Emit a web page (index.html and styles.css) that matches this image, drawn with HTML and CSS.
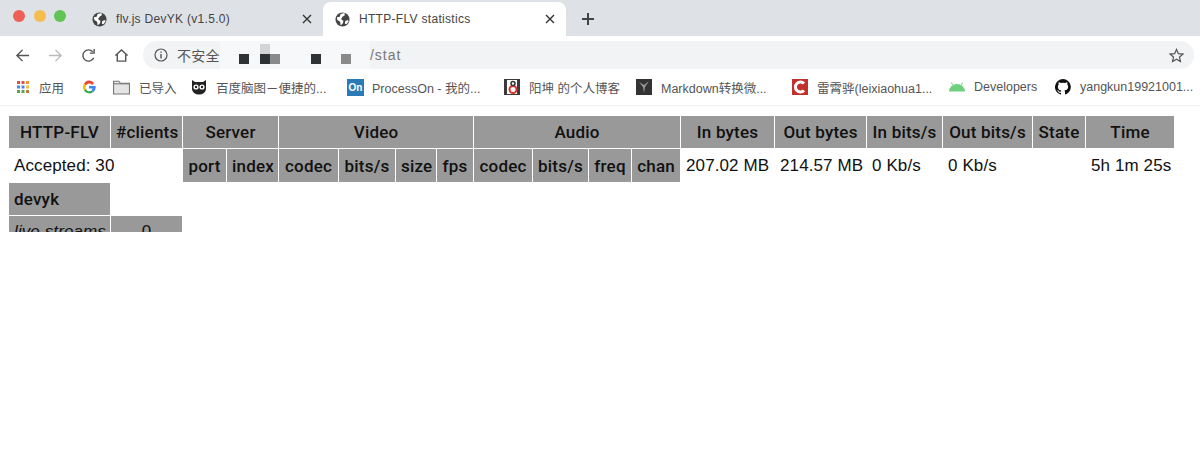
FILE: index.html
```html
<!DOCTYPE html>
<html lang="en">
<head>
  <meta charset="UTF-8" />
  <title>HTTP-FLV statistics</title>
  <link rel="stylesheet" href="styles.css">
</head>
<body>

<svg class="defs" width="0" height="0">
  <symbol id="globe" viewBox="0 0 16 16">
    <circle cx="8" cy="8" r="7.5" fill="#444"/>
    <path d="M2 5.5 5 5l1-3 4-1 .5 2.5L8 5 6.5 7.5 9 9.500 8.500 12 6 14.500 5.500 10.500 2.500 8.500zM11 9.500l3-1 .5 1.500-2.500 3-1.500-.5z" fill="#fff"/>
  </symbol>
  <symbol id="close" viewBox="0 0 10 10">
    <path d="M1 1l8 8M9 1l-8 8" stroke="#333" stroke-width="1.400" fill="none"/>
  </symbol>
</svg>

<!-- Tab strip -->
<div class="tabstrip">
  <div class="lights">
    <span class="light red"></span>
    <span class="light yellow"></span>
    <span class="light green"></span>
  </div>
  <div class="tab">
    <svg class="globe"><use href="#globe"/></svg>
    <span class="tab-title">flv.js DevYK (v1.5.0)</span>
    <svg class="tab-close"><use href="#close"/></svg>
  </div>
  <div class="tab active">
    <svg class="globe"><use href="#globe"/></svg>
    <span class="tab-title">HTTP-FLV statistics</span>
    <svg class="tab-close"><use href="#close"/></svg>
  </div>
  <svg class="new-tab" viewBox="0 0 14 14"><path d="M7 1v12M1 7h12" stroke="#444" stroke-width="2" fill="none"/></svg>
</div>

<!-- Toolbar -->
<div class="toolbar">
  <svg class="nav" viewBox="0 0 16 16"><path d="M15 8H2M8 2 2 8l6 6" stroke="#555" stroke-width="1.500" fill="none"/></svg>
  <svg class="nav" viewBox="0 0 16 16"><path d="M1 8h13M8 2l6 6-6 6" stroke="#bbb" stroke-width="1.500" fill="none"/></svg>
  <svg class="nav" viewBox="0 0 16 16"><path d="M13.500 10.500A6 6 0 1 1 12.500 4M14 1v4.500H9.500" stroke="#555" stroke-width="1.500" fill="none"/></svg>
  <svg class="nav" viewBox="0 0 16 16"><path d="M1.500 8 8 2l6.500 6M3.500 7v7h9V7" stroke="#555" stroke-width="1.500" fill="none"/></svg>
  <div class="omnibox">
    <svg class="info" viewBox="0 0 14 14"><circle cx="7" cy="7" r="6" stroke="#555" stroke-width="1.200" fill="none"/><path d="M7 6v4.500M7 3.500v1.300" stroke="#555" stroke-width="1.400"/></svg>
    <span class="insecure">不安全</span>
    <div class="mosaic">
      <span class="blot dark"></span>
      <span class="blot-stack"><span class="blot pale"></span><span class="blot dark"></span></span>
      <span class="blot mid"></span>
      <span class="blot dark gap-l"></span>
      <span class="blot mid gap-m"></span>
    </div>
    <span class="url">/stat</span>
    <svg class="star" viewBox="0 0 16 16"><path d="M8 1.500 10 6l4.800.5-3.600 3.200 1 4.800L8 12l-4.200 2.500 1-4.800L1.200 6.500 6 6z" stroke="#555" stroke-width="1.300" fill="none"/></svg>
  </div>
</div>

<!-- Bookmarks -->
<div class="bookmarks">
  <div class="bm bm-apps">
    <svg class="fav small" viewBox="0 0 14 14">
      <g fill="#d9534f"><rect x="1" y="1" width="3" height="3"/><rect x="5.500" y="1" width="3" height="3"/></g><rect x="10" y="1" width="3" height="3" fill="#e8963c"/>
      <rect x="1" y="5.500" width="3" height="3" fill="#4a86e8"/><rect x="5.500" y="5.500" width="3" height="3" fill="#4a86e8"/><rect x="10" y="5.500" width="3" height="3" fill="#f1c232"/>
      <rect x="1" y="10" width="3" height="3" fill="#5aa55a"/><rect x="5.500" y="10" width="3" height="3" fill="#5aa55a"/><rect x="10" y="10" width="3" height="3" fill="#c27c3a"/>
    </svg>
    <span>应用</span>
  </div>
  <div class="bm bm-g">
    <svg class="fav small" viewBox="0 0 14 14">
      <path d="M12 3A6 6 0 0 0 2 3.500L4 5.500A3.500 3.500 0 0 1 10 5z" fill="#ea4335"/>
      <path d="M2 3.500a6.500 6.500 0 0 0 0 7L4 9a3.500 3.500 0 0 1 0-3.500z" fill="#fbbc05"/>
      <path d="M2 10.500a6.500 6.500 0 0 0 9.500 1.500L9.500 10.500A3.500 3.500 0 0 1 4 9z" fill="#34a853"/>
      <path d="M13.500 6H7v2.500h3.500a3 3 0 0 1-1 2l2 1.500a6 6 0 0 0 2-6z" fill="#4285f4"/>
    </svg>
  </div>
  <div class="bm bm-folder">
    <svg class="fav folder" viewBox="0 0 16 14"><path d="M.5 1.500h5l1.500 2h8.500v10H.5z" fill="#e4e4e4" stroke="#777"/><path d="M.5 4h15" stroke="#777"/></svg>
    <span>已导入</span>
  </div>
  <div class="bm bm-owl">
    <svg class="fav" viewBox="0 0 16 16"><path d="M1 1l3 2h8l3-2v9a7 5.500 0 0 1-14 0z" fill="#222"/><circle cx="5" cy="8" r="2.600" fill="#fff"/><circle cx="11" cy="8" r="2.600" fill="#fff"/><circle cx="5" cy="8" r="1.200" fill="#222"/><circle cx="11" cy="8" r="1.200" fill="#222"/></svg>
    <span>百度脑图－便捷的...</span>
  </div>
  <div class="bm bm-on">
    <span class="on-icon">On</span>
    <span>ProcessOn - 我的...</span>
  </div>
  <div class="bm bm-yk">
    <svg class="fav" viewBox="0 0 16 16"><rect width="16" height="16" fill="#3a3a3a"/><rect x="3" y="1" width="10" height="14" fill="#fff"/><circle cx="9" cy="10.500" r="3.500" fill="none" stroke="#d9342b" stroke-width="2"/><circle cx="9" cy="4.500" r="2" fill="none" stroke="#333" stroke-width="1.500"/></svg>
    <span>阳坤 的个人博客</span>
  </div>
  <div class="bm bm-md">
    <svg class="fav" viewBox="0 0 16 16"><rect width="16" height="16" fill="#333"/><path d="M3 3l4 5 1 6 1-6 4-6-5 4z" fill="#999"/></svg>
    <span>Markdown转换微...</span>
  </div>
  <div class="bm bm-lei">
    <svg class="fav" viewBox="0 0 16 16"><rect width="16" height="16" fill="#c4302b"/><path d="M12 4.500A5 5 0 1 0 12 11.500" stroke="#fff" stroke-width="3" fill="none"/></svg>
    <span>雷霄骅(leixiaohua1...</span>
  </div>
  <div class="bm bm-droid">
    <svg class="fav" viewBox="0 0 16 16"><path d="M0 12.500a8 7.500 0 0 1 16 0z" fill="#6fcf7f"/><path d="M3.500 6 2.500 3.500M12.500 6l1-2.500" stroke="#6fcf7f" stroke-width="1"/></svg>
    <span>Developers</span>
  </div>
  <div class="bm bm-gh">
    <svg class="fav" viewBox="0 0 16 16"><path d="M8 0a8 8 0 0 0-2.500 15.600c.4.100.5-.2.500-.4v-1.400c-2.200.5-2.700-1-2.700-1-.4-.9-.9-1.200-.9-1.200-.7-.5.100-.5.100-.5.800.1 1.200.8 1.200.8.700 1.200 1.900.9 2.300.7.100-.5.300-.9.500-1.100-1.800-.2-3.600-.9-3.600-4 0-.9.300-1.600.8-2.100-.1-.2-.4-1 .1-2.100 0 0 .7-.2 2.200.8a7.600 7.600 0 0 1 4 0c1.500-1 2.200-.8 2.200-.8.400 1.100.2 1.900.1 2.100.5.600.8 1.300.8 2.100 0 3.100-1.900 3.700-3.700 3.900.3.300.6.800.6 1.500v2.200c0 .2.100.5.600.4A8 8 0 0 0 8 0z" fill="#111"/></svg>
    <span>yangkun19921001...</span>
  </div>
</div>

<!-- Page -->
<div class="page">
  <table class="stat">
    <colgroup>
      <col class="c101"><col class="c71"><col class="c43"><col class="c51"><col class="c59"><col class="c56">
      <col class="c40"><col class="c36"><col class="c58"><col class="c55"><col class="c42"><col class="c48">
      <col class="c93"><col class="c91"><col class="c75"><col class="c89"><col class="c52"><col class="c88">
    </colgroup>
    <tr>
      <th>HTTP-FLV</th>
      <th>#clients</th>
      <th colspan="2">Server</th>
      <th colspan="4">Video</th>
      <th colspan="4">Audio</th>
      <th>In bytes</th>
      <th>Out bytes</th>
      <th>In bits/s</th>
      <th>Out bits/s</th>
      <th>State</th>
      <th>Time</th>
    </tr>
    <tr class="tall">
      <td colspan="2">Accepted: 30</td>
      <th>port</th>
      <th>index</th>
      <th>codec</th>
      <th>bits/s</th>
      <th>size</th>
      <th>fps</th>
      <th>codec</th>
      <th>bits/s</th>
      <th>freq</th>
      <th>chan</th>
      <td>207.02 MB</td>
      <td>214.57 MB</td>
      <td>0 Kb/s</td>
      <td>0 Kb/s</td>
      <td></td>
      <td>5h 1m 25s</td>
    </tr>
    <tr>
      <th class="left">devyk</th>
    </tr>
    <tr>
      <td class="shaded"><i>live streams</i></td>
      <td class="shaded center">0</td>
    </tr>
  </table>
</div>

</body>
</html>
```

FILE: styles.css
```css
* {
  box-sizing: border-box;
}

html, body {
  margin: 0;
  height: 100%;
  overflow: hidden;
}

body {
  font-family: "Liberation Sans", "Noto Sans CJK SC", sans-serif;
  background: #fff;
  color: #444;
}

.defs {
  display: block;
  height: 0;
}

/* tab strip */
.tabstrip {
  display: flex;
  align-items: flex-end;
  height: 36px;
  background: #dee1e6;
}

.lights {
  display: flex;
  gap: 8.500px;
  width: 79px;
  padding: 0 0 14px 13px;
  align-self: flex-end;
}

.light {
  width: 12px;
  height: 12px;
  border-radius: 50%;
}

.light.red { background: #ee5f57; }
.light.yellow { background: #f5bd4f; }
.light.green { background: #60c554; }

.tab {
  display: flex;
  align-items: center;
  width: 244px;
  height: 34px;
  padding: 0 11px 0 13px;
  font-size: 12px;
  letter-spacing: 0.3px;
  border-radius: 8px 8px 0 0;
}

.tab.active {
  background: #fff;
  width: 243px;
  padding-left: 12px;
}

.globe {
  width: 15px;
  height: 15px;
  flex: none;
  margin-right: 9px;
}

.tab-title {
  flex: 1;
  white-space: nowrap;
}

.tab-close {
  width: 10px;
  height: 10px;
  flex: none;
}

.new-tab {
  width: 14px;
  height: 14px;
  margin: 0 0 10px 15px;
}

/* toolbar */
.toolbar {
  display: flex;
  align-items: center;
  height: 34px;
  padding: 4px 6px 0 15px;
  background: #fff;
}

.nav {
  width: 15px;
  height: 15px;
  flex: none;
  margin-right: 18px;
}

.nav:nth-child(4) {
  margin-right: 14px;
}

.omnibox {
  display: flex;
  align-items: center;
  flex: 1;
  height: 28px;
  padding: 0 10px 0 11px;
  border-radius: 14px;
  background: #f1f3f4;
  font-size: 14px;
}

.info {
  width: 14px;
  height: 14px;
  margin-right: 9px;
}

.insecure {
  color: #555;
  letter-spacing: 0.3px;
  white-space: nowrap;
}

.mosaic {
  display: flex;
  align-items: flex-end;
  width: 150px;
  height: 100%;
  padding: 0 0 5px 19px;
  background: #f7f8f9;
}

.blot {
  display: block;
  width: 10px;
  height: 10px;
}

.blot-stack {
  display: flex;
  flex-direction: column;
  margin-left: 11px;
}

.blot.dark { background: #2e3234; }
.blot.mid { background: #8a8a8a; }
.blot.pale { background: #d4d4d4; }
.blot.gap-l { margin-left: 31px; }
.blot.gap-m { margin-left: 20px; }

.url {
  flex: 1;
  color: #777;
  letter-spacing: 1px;
}

.star {
  width: 15px;
  height: 15px;
}

/* bookmarks */
.bookmarks {
  display: flex;
  align-items: center;
  height: 36px;
  padding-bottom: 1px;
  border-bottom: 1px solid #f0f0f0;
  font-size: 12.500px;
  color: #555;
  white-space: nowrap;
}

.bm {
  display: flex;
  align-items: center;
  gap: 9px;
}

.fav {
  width: 16px;
  height: 16px;
  flex: none;
}

.fav.small {
  width: 14px;
  height: 14px;
}

.fav.folder {
  width: 17px;
}

.on-icon {
  width: 17px;
  height: 17px;
  flex: none;
  margin-right: -1px;
  background: #2a7ab8;
  color: #fff;
  font-size: 10px;
  font-weight: bold;
  line-height: 17px;
  text-align: center;
}

.bm-apps { width: 66px; margin-left: 16px; }
.bm-g { width: 31px; }
.bm-folder { width: 78px; }
.bm-owl { width: 156px; }
.bm-on { width: 157px; }
.bm-yk { width: 132px; }
.bm-md { width: 156px; }
.bm-lei { width: 157px; }
.bm-droid { width: 106px; }
.bm-gh { width: 140px; }

/* stat table */
.page {
  height: 126px;
  padding: 9px 8px 0;
  overflow: hidden;
}

.stat {
  table-layout: fixed;
  width: 1167px;
  border-collapse: separate;
  border-spacing: 1px;
  font-size: 17px;
  letter-spacing: 0.1px;
  color: #111;
}

.stat th,
.stat td {
  padding: 0 5px;
  white-space: nowrap;
  overflow: hidden;
  font-weight: normal;
  height: 32px;
}

.stat .tall th,
.stat .tall td {
  height: 33px;
}

.stat th {
  background: #999;
  font-family: Roboto, "Liberation Sans", sans-serif;
  font-weight: 500;
  font-size: 17px;
  letter-spacing: 0.2px;
  text-align: center;
}

.stat th.left {
  text-align: left;
}

.stat td.shaded {
  background: #999;
}

.stat td.center {
  text-align: center;
}

.c101 { width: 101px; }
.c71 { width: 71px; }
.c43 { width: 43px; }
.c51 { width: 51px; }
.c59 { width: 59px; }
.c56 { width: 56px; }
.c40 { width: 40px; }
.c36 { width: 36px; }
.c58 { width: 58px; }
.c55 { width: 55px; }
.c42 { width: 42px; }
.c48 { width: 48px; }
.c93 { width: 93px; }
.c91 { width: 91px; }
.c75 { width: 75px; }
.c89 { width: 89px; }
.c52 { width: 52px; }
.c88 { width: 88px; }
```
